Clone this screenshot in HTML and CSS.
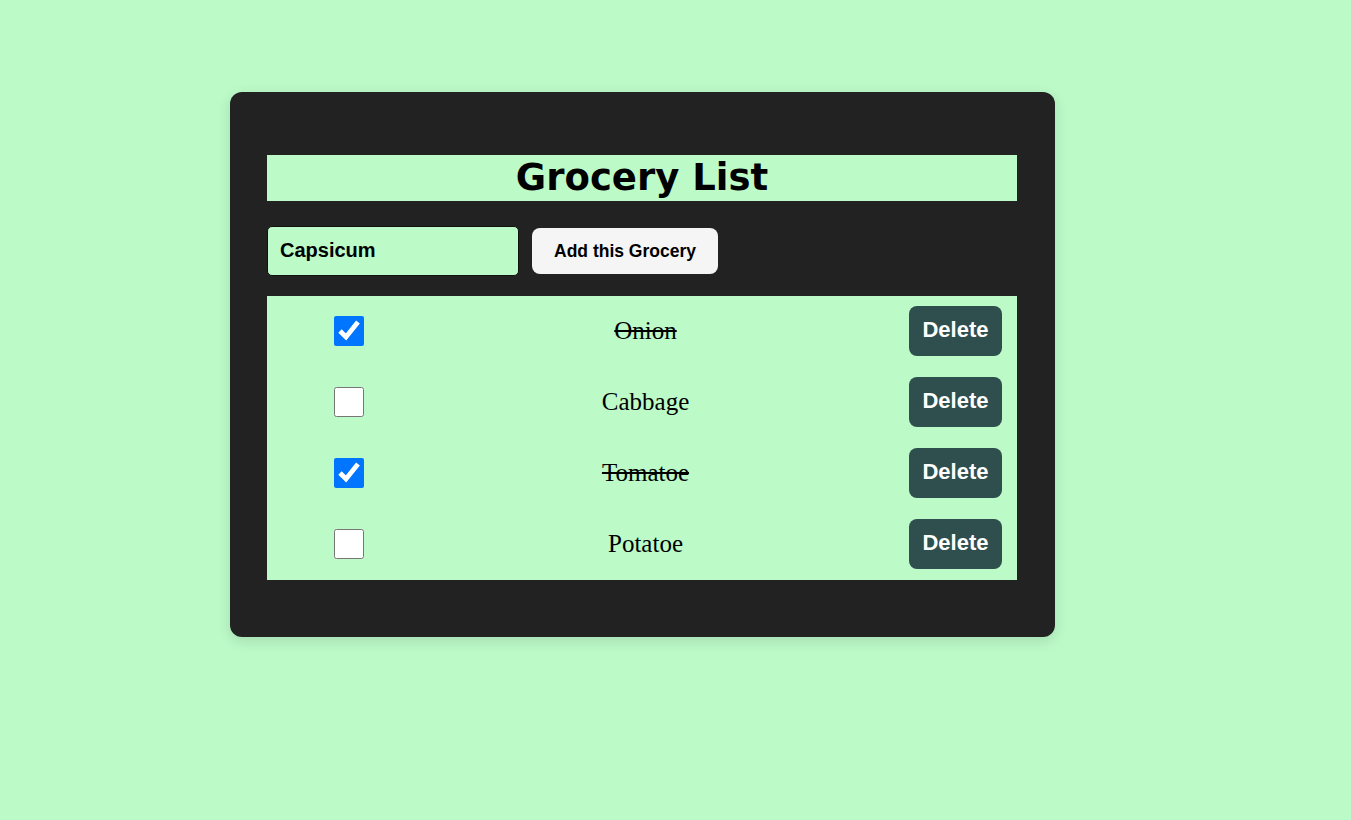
FILE: index.html
```html
<!DOCTYPE html>
<html>
<head>
<meta charset="utf-8">
<title>Grocery List</title>
<link rel="stylesheet" href="styles.css">
</head>
<body>
<main class="card">
  <h1 class="title">Grocery List</h1>
  <form class="add-form">
    <input class="add-input" type="text" value="Capsicum">
    <button class="add-btn" type="button">Add this Grocery</button>
  </form>
  <ul class="list">
    <li class="item"><input class="check" type="checkbox" checked><span class="name done">Onion</span><button class="del" type="button">Delete</button></li>
    <li class="item"><input class="check" type="checkbox"><span class="name">Cabbage</span><button class="del" type="button">Delete</button></li>
    <li class="item"><input class="check" type="checkbox" checked><span class="name done">Tomatoe</span><button class="del" type="button">Delete</button></li>
    <li class="item"><input class="check" type="checkbox"><span class="name">Potatoe</span><button class="del" type="button">Delete</button></li>
  </ul>
</main>
</body>
</html>
```
FILE: styles.css
```css
html, body {
  margin: 0;
  padding: 0;
}
body {
  background: #bcfac8;
  min-height: 820px;
  padding: 92px 0 0 230px;
  box-sizing: border-box;
}
.card {
  width: 825px;
  box-sizing: border-box;
  background: #222222;
  border-radius: 12px;
  padding: 63px 38px 57px 37px;
  box-shadow: 0 4px 14px rgba(0, 0, 0, 0.12);
}
.title {
  margin: 0;
  height: 46px;
  overflow: hidden;
  background: #bcfac8;
  color: #000;
  font-family: Verdana, "DejaVu Sans", sans-serif;
  font-weight: bold;
  font-size: 37px;
  line-height: 46px;
  text-align: center;
}
.add-form {
  display: flex;
  align-items: center;
  gap: 12px;
  margin: 25px 0 20px;
}
.add-input {
  width: 252px;
  height: 50px;
  box-sizing: border-box;
  margin: 0;
  padding: 0 12px 2px;
  background: #bcfac8;
  border: 1px solid #111;
  border-radius: 5px;
  font-family: "Liberation Sans", Arial, sans-serif;
  font-weight: bold;
  font-size: 20px;
  color: #000;
  outline: none;
}
.add-btn {
  height: 46px;
  width: 186px;
  box-sizing: border-box;
  margin: 0 0 0 1px;
  padding: 0;
  background: #f5f5f5;
  border: none;
  border-radius: 8px;
  font-family: "Liberation Sans", Arial, sans-serif;
  font-weight: bold;
  font-size: 17.5px;
  color: #000;
}
.list {
  list-style: none;
  margin: 0;
  padding: 0;
  background: #bcfac8;
}
.item {
  display: flex;
  align-items: center;
  height: 71px;
  padding: 0 15px 1px 67px;
  box-sizing: border-box;
}
.check {
  width: 30px;
  height: 30px;
  margin: 0;
  flex: none;
}
.name {
  flex: 1;
  text-align: center;
  padding-left: 18px;
  font-family: "Liberation Serif", "Times New Roman", serif;
  font-size: 25px;
  color: #000;
}
.done {
  text-decoration: line-through;
}
.del {
  flex: none;
  width: 93px;
  height: 50px;
  margin: 0;
  padding: 0 0 2px;
  background: #2f4f4f;
  border: none;
  border-radius: 8px;
  color: #fff;
  font-family: "Liberation Sans", Arial, sans-serif;
  font-weight: bold;
  font-size: 22px;
}
```
